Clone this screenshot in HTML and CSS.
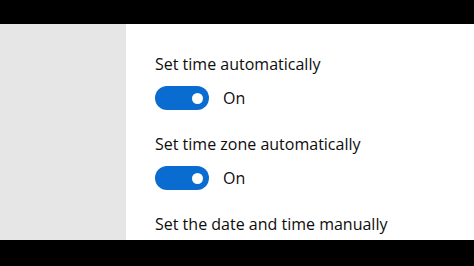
FILE: index.html
```html
<!DOCTYPE html>
<html>
<head>
<meta charset="utf-8">
<link rel="stylesheet" href="styles.css">
</head>
<body>
<div class="bar bar-top"></div>
<div class="main">
  <div class="sidebar"></div>
  <div class="content">
    <div class="setting">
      <div class="label">Set time automatically</div>
      <div class="toggle-row">
        <div class="toggle"><span class="knob"></span></div>
        <span class="state">On</span>
      </div>
    </div>
    <div class="setting">
      <div class="label">Set time zone automatically</div>
      <div class="toggle-row">
        <div class="toggle"><span class="knob"></span></div>
        <span class="state">On</span>
      </div>
    </div>
    <div class="setting">
      <div class="label">Set the date and time manually</div>
    </div>
  </div>
</div>
<div class="bar bar-bottom"></div>
</body>
</html>
```
FILE: styles.css
```css
html, body {
  margin: 0;
  padding: 0;
  width: 474px;
  height: 266px;
  overflow: hidden;
  background: #000;
  font-family: "Open Sans", "Noto Sans", sans-serif;
  color: #0d0d0d;
}
.bar { background: #000; }
.bar-top { height: 24px; }
.bar-bottom { height: 26px; }
.main {
  display: flex;
  height: 216px;
  overflow: hidden;
}
.sidebar {
  width: 126px;
  background: #e6e6e6;
}
.content {
  flex: 1;
  background: #fff;
  padding: 29px 0 0 29px;
  display: flex;
  flex-direction: column;
  gap: 23px;
}
.label {
  font-size: 16px;
  line-height: 22px;
  height: 22px;
  white-space: nowrap;
}
.toggle-row {
  display: flex;
  align-items: center;
  margin-top: 11px;
  height: 24px;
}
.toggle {
  width: 54px;
  height: 24px;
  border-radius: 12px;
  background: #0a6cd0;
  display: flex;
  align-items: center;
  justify-content: flex-end;
  padding-right: 6px;
  box-sizing: border-box;
}
.knob {
  width: 11px;
  height: 11px;
  border-radius: 50%;
  background: #fff;
}
.state {
  margin-left: 14px;
  font-size: 16px;
  line-height: 22px;
}
```
